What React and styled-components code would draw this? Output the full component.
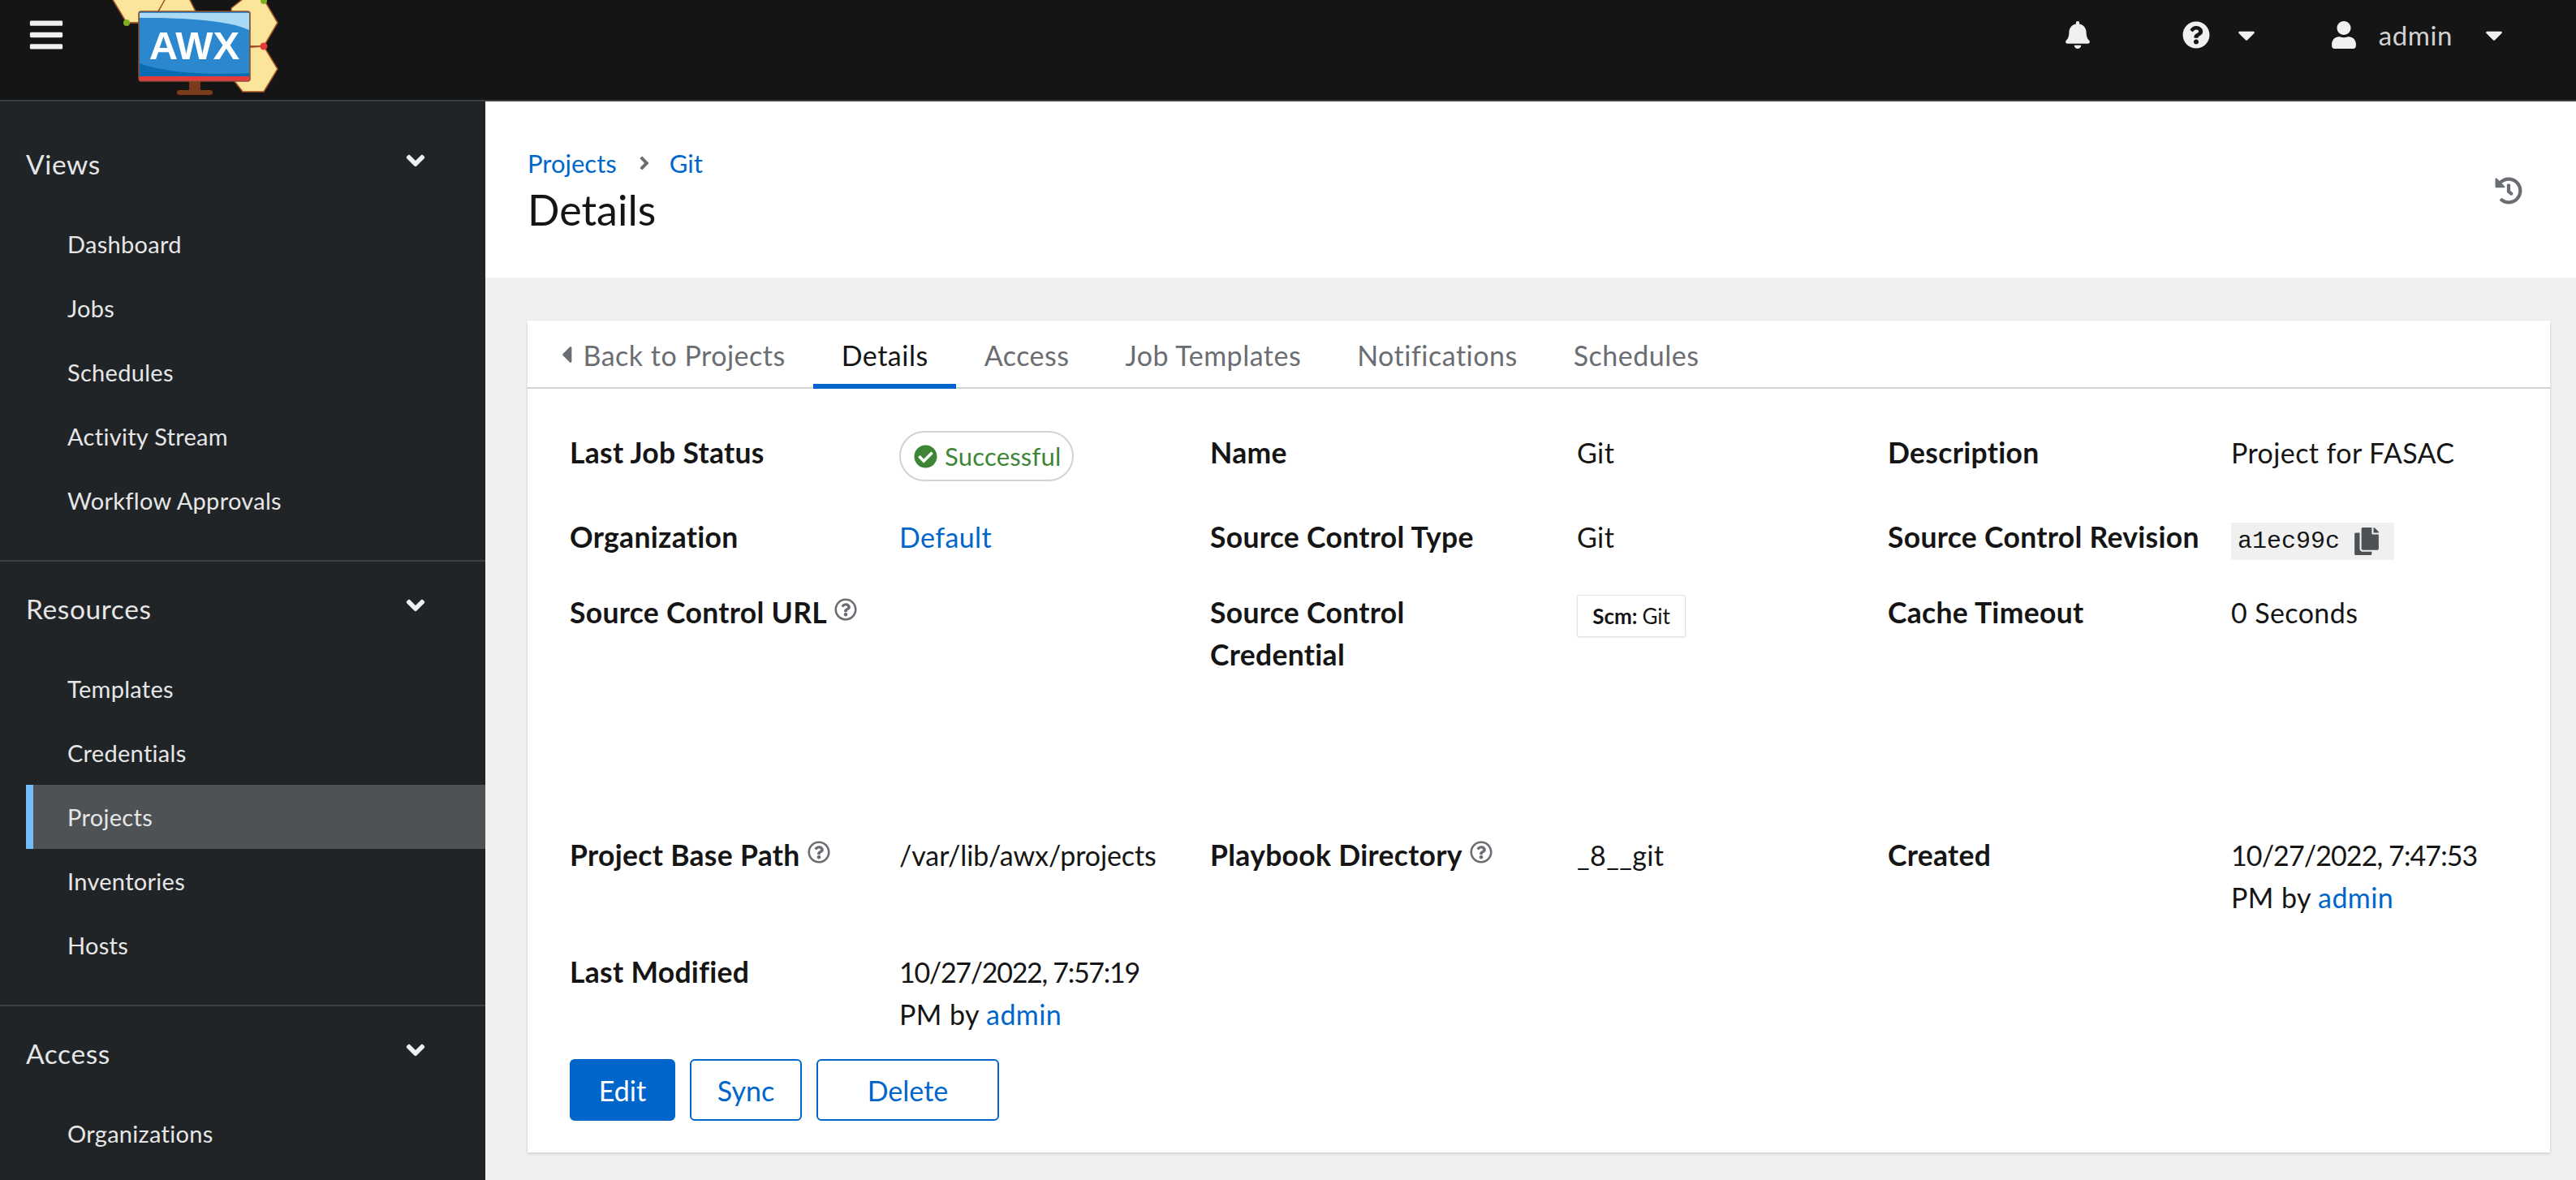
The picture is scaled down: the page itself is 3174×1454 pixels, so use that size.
import React from "react";
import styled, { createGlobalStyle } from "styled-components";
import {
  FaBars, FaBell, FaQuestionCircle, FaCaretDown, FaUser, FaHistory, FaAngleDown,
  FaAngleRight, FaCaretLeft, FaCheckCircle, FaRegQuestionCircle, FaCopy,
} from "react-icons/fa";

const FONT = `Lato, "Open Sans", "Liberation Sans", sans-serif`;

const Global = createGlobalStyle`
  html, body { margin: 0; padding: 0; height: 100%; overflow: hidden; }
  body { font-family: ${FONT}; font-size: 34px; color: #151515; background: #f0f0f0; }
  * { box-sizing: border-box; }
`;

const Shell = styled.div`display: flex; flex-direction: column; height: 100vh; overflow: hidden;`;
const Header = styled.header`
  flex: 0 0 125px; display: flex; align-items: flex-start; background: #151515; color: #f0f0f0;
  border-bottom: 2px solid #3c3f42;
`;
const Burger = styled.span`display: flex; margin: 20px 57px 0 34px; font-size: 46px; color: #f0f0f0;`;
const LogoSvg = styled.svg`display: block; width: 208px; height: 123px;`;
const HeaderRight = styled.div`
  margin-left: auto; height: 86px; display: flex; align-items: center; padding-right: 84px;
`;
const HeadIcon = styled.span`
  display: flex; font-size: ${p => p.$size || 34}px; margin-left: ${p => p.$ml || 0}px; color: #f0f0f0;
`;
const UserName = styled.span`margin-left: 26px; font-size: 33px; color: #d2d2d2; letter-spacing: .6px;`;

const Body = styled.div`flex: 1; display: flex; min-height: 0;`;
const Sidebar = styled.nav`
  flex: 0 0 598px; background: #212427; color: #f0f0f0; padding-top: 19px; overflow: hidden;
`;
const Section = styled.section`padding: 19px 0 34px; border-bottom: 2px solid #3c3f42;`;
const SectionTitle = styled.div`
  height: 78px; display: flex; align-items: center; justify-content: space-between;
  padding: 0 68px 0 32px; font-size: 33.5px; color: #e6e6e6; letter-spacing: .6px;
`;
const Chevron = styled.span`display: flex; font-size: 36px; color: #f0f0f0; margin-top: -8px;`;
const NavList = styled.div`margin-top: 20px; margin-left: 32px;`;
const NavItem = styled.div`
  height: 79px; display: flex; align-items: center; font-size: 29px; letter-spacing: .3px;
  padding-left: ${p => (p.$active ? 42 : 51)}px; color: #e6e6e6;
  background: ${p => (p.$active ? "#4f5255" : "transparent")};
  border-left: ${p => (p.$active ? "9px solid #73bcf7" : "none")};
`;

const Main = styled.main`flex: 1; display: flex; flex-direction: column; min-width: 0;`;
const PageHead = styled.div`
  flex: 0 0 217px; background: #fff; display: flex; align-items: center; justify-content: space-between;
  padding: 3px 66px 0 52px;
`;
const Crumbs = styled.div`
  display: flex; align-items: center; height: 40px; font-size: 31px; color: #0066cc;
`;
const CrumbSep = styled.span`display: flex; margin: 0 18px 0 21px; font-size: 26px; color: #6a6e73;`;
const Title = styled.h1`margin: 5px 0 0; font-size: 52px; line-height: 64px; font-weight: 400; color: #151515;`;
const HistoryBtn = styled.span`display: flex; font-size: 34px; color: #6a6e73;`;

const Content = styled.div`flex: 1; display: flex; padding: 53px 32px 34px 52px; min-height: 0;`;
const Card = styled.div`
  flex: 1; background: #fff; box-shadow: 0 2px 4px rgba(3,3,3,.12), 0 0 2px rgba(3,3,3,.06);
`;
const Tabs = styled.div`
  height: 84px; display: flex; align-items: stretch; padding-left: 20px; border-bottom: 2px solid #d2d2d2;
`;
const Tab = styled.div`
  display: flex; align-items: center; padding: 0 34.5px; font-size: 34px; letter-spacing: .5px; height: 84px;
  color: ${p => (p.$active ? "#151515" : "#6a6e73")};
  border-bottom: ${p => (p.$active ? "6px solid #0066cc" : "none")};
  padding-top: ${p => (p.$active ? 6 : 0)}px;
`;
const BackCaret = styled.span`display: flex; font-size: 34px; margin: 0 4px 0 -24px;`;
const CardBody = styled.div`padding: 53px 32px 0 52px;`;
const Grid = styled.dl`
  margin: 0; display: grid;
  grid-template-columns: 406px 383px 452px 383px 423px 1fr;
  grid-template-rows: 104px 93px 299px 144px 133px;
`;
const Label = styled.dt`
  font-weight: 700; line-height: 52px; font-size: 35.5px; letter-spacing: .3px; color: #151515; white-space: pre-line;
`;
const Value = styled.dd`margin: 0; line-height: 52px; font-size: 34px; letter-spacing: .4px; color: #151515; white-space: nowrap;`;
const Tight = styled.span`letter-spacing: ${p => p.$ls}px;`;
const HelpIcon = styled(FaRegQuestionCircle)`
  font-size: 28px; color: #6a6e73; margin-left: 9px; vertical-align: 3px;
`;
const Link = styled.a`color: #0066cc;`;
const Pill = styled.span`
  display: inline-flex; align-items: center; height: 62px; width: 215px; padding-left: 16px;
  border: 2px solid #d2d2d2; border-radius: 31px; color: #3e8635; font-size: 31px; letter-spacing: .2px; margin-top: -1px;
`;
const PillIcon = styled(FaCheckCircle)`font-size: 29px; margin-right: 9px; flex: none;`;
const Code = styled.span`
  display: inline-flex; align-items: center; height: 46px; width: 201px; padding-left: 8px;
  background: #f0f0f0; font-family: "Liberation Mono", monospace; font-size: 30px; letter-spacing: 0; color: #151515;
`;
const CopyIcon = styled(FaCopy)`font-size: 34px; color: #4f5255; margin-left: 16px;`;
const Chip = styled.span`
  display: inline-flex; align-items: center; height: 52px; width: 134px; justify-content: center;
  border: 1px solid #e4e4e4; box-shadow: 0 1px 2px rgba(3,3,3,.08); font-size: 26px; letter-spacing: 0; border-radius: 2px;
  margin-top: 4px; vertical-align: top; line-height: 1;
`;
const ChipKey = styled.b`margin-right: 6px;`;
const Actions = styled.div`display: flex; gap: 18px;`;
const Button = styled.button`
  height: 76px; width: ${p => p.$w}px; border-radius: 6px; font: inherit; font-size: 34px; padding: 0;
  border: 2px solid #0066cc;
  background: ${p => (p.$primary ? "#0066cc" : "#fff")};
  color: ${p => (p.$primary ? "#fff" : "#0066cc")};
`;

const Logo = () => (
  <LogoSvg viewBox="137 0 208 123">
    <g fill="#fbe59b" stroke="#a5552a" strokeWidth="1.5">
      <polygon points="138,-2 156,28 186,28 205,-2" />
      <polygon points="194,16 204,-2 233,-2 242,16" />
      <polygon points="285,10 299,-1 325,-1 342,28 325,57 285,57" />
      <polygon points="285,60 325,57 342,85 325,113 299,113 285,95" />
    </g>
    <path d="M156 28 H172 M308 57 H325" stroke="#a5552a" strokeWidth="1.5" />
    <circle cx="156" cy="28" r="4" fill="#7fb01f" />
    <circle cx="325" cy="1" r="4" fill="#7fb01f" />
    <circle cx="325" cy="57" r="4.5" fill="#e63b3b" />
    <rect x="233" y="100" width="14" height="12" fill="#7a3a1c" />
    <rect x="218" y="111" width="44" height="6" rx="3" fill="#7a3a1c" />
    <rect x="171" y="14" width="137" height="86" rx="3" fill="#2b88cf" stroke="#8a4a2a" strokeWidth="1.5" />
    <path d="M172 16 H307 V37 C280 24 220 22 172 22 Z" fill="#a9d9f5" />
    <path d="M172 78 C210 92 270 92 307 90 V94 H172 Z" fill="#0b6cb3" />
    <rect x="172" y="94" width="135" height="5.5" fill="#e63b3b" />
    <text x="239.5" y="72.5" textAnchor="middle" fontFamily="Liberation Sans, sans-serif" fontWeight="700" fontSize="49" fill="#fff">AWX</text>
  </LogoSvg>
);

const NAV = [
  { title: "Views", items: ["Dashboard", "Jobs", "Schedules", "Activity Stream", "Workflow Approvals"] },
  { title: "Resources", items: ["Templates", "Credentials", "Projects", "Inventories", "Hosts"] },
  { title: "Access", items: ["Organizations"] },
];

const TABS = ["Details", "Access", "Job Templates", "Notifications", "Schedules"];

export default function App() {
  return (
    <Shell>
      <Global />
      <Header>
        <Burger><FaBars /></Burger>
        <Logo />
        <HeaderRight>
          <HeadIcon $size={34}><FaBell /></HeadIcon>
          <HeadIcon $size={34} $ml={112}><FaQuestionCircle /></HeadIcon>
          <HeadIcon $size={34} $ml={28}><FaCaretDown /></HeadIcon>
          <HeadIcon $size={34} $ml={86}><FaUser /></HeadIcon>
          <UserName>admin</UserName>
          <HeadIcon $size={34} $ml={34}><FaCaretDown /></HeadIcon>
        </HeaderRight>
      </Header>
      <Body>
        <Sidebar>
          {NAV.map(s => (
            <Section key={s.title}>
              <SectionTitle>{s.title}<Chevron><FaAngleDown /></Chevron></SectionTitle>
              <NavList>
                {s.items.map(i => <NavItem key={i} $active={i === "Projects"}>{i}</NavItem>)}
              </NavList>
            </Section>
          ))}
        </Sidebar>
        <Main>
          <PageHead>
            <div>
              <Crumbs>Projects<CrumbSep><FaAngleRight /></CrumbSep>Git</Crumbs>
              <Title>Details</Title>
            </div>
            <HistoryBtn><FaHistory /></HistoryBtn>
          </PageHead>
          <Content>
            <Card>
              <Tabs>
                <Tab><BackCaret><FaCaretLeft /></BackCaret>Back to Projects</Tab>
                {TABS.map(t => <Tab key={t} $active={t === "Details"}>{t}</Tab>)}
              </Tabs>
              <CardBody>
                <Grid>
                  <Label>Last Job Status</Label>
                  <Value><Pill><PillIcon />Successful</Pill></Value>
                  <Label>Name</Label>
                  <Value>Git</Value>
                  <Label>Description</Label>
                  <Value>Project for FASAC</Value>

                  <Label>Organization</Label>
                  <Value><Link>Default</Link></Value>
                  <Label>Source Control Type</Label>
                  <Value>Git</Value>
                  <Label>Source Control Revision</Label>
                  <Value><Code>a1ec99c<CopyIcon /></Code></Value>

                  <Label>Source Control URL<HelpIcon /></Label>
                  <Value />
                  <Label>{"Source Control\nCredential"}</Label>
                  <Value><Chip><ChipKey>Scm:</ChipKey>Git</Chip></Value>
                  <Label>Cache Timeout</Label>
                  <Value>0 Seconds</Value>

                  <Label>Project Base Path<HelpIcon /></Label>
                  <Value><Tight $ls={-0.1}>/var/lib/awx/projects</Tight></Value>
                  <Label>Playbook Directory<HelpIcon /></Label>
                  <Value>_8__git</Value>
                  <Label>Created</Label>
                  <Value><Tight $ls={-0.9}>10/27/2022, 7:47:53</Tight><br />PM by <Link>admin</Link></Value>

                  <Label>Last Modified</Label>
                  <Value><Tight $ls={-1.3}>10/27/2022, 7:57:19</Tight><br />PM by <Link>admin</Link></Value>
                </Grid>
                <Actions>
                  <Button $primary $w={130}>Edit</Button>
                  <Button $w={138}>Sync</Button>
                  <Button $w={225}>Delete</Button>
                </Actions>
              </CardBody>
            </Card>
          </Content>
        </Main>
      </Body>
    </Shell>
  );
}
